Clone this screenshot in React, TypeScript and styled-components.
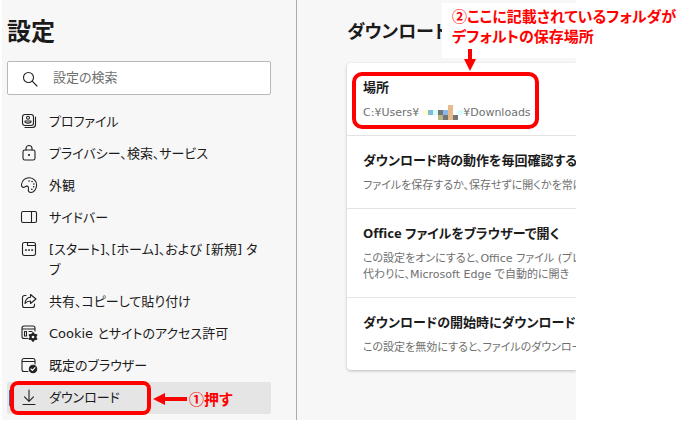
import React from 'react';
import styled, { createGlobalStyle, css } from 'styled-components';

const Global = createGlobalStyle`
  * { box-sizing: border-box; }
  body {
    margin: 0;
    background: #fff;
    color: #1b1b1b;
    font: 13px/20px "DejaVu Sans", "Noto Sans CJK JP", sans-serif;
    font-feature-settings: "palt";
  }
  h1, h2, h3, p, ul { margin: 0; padding: 0; }
`;

const Page = styled.div`
  position: relative;
  padding: 0 114px 0 2px;
`;

const Window = styled.div`
  display: grid;
  grid-template-columns: 295px minmax(0, 1fr);
  min-height: 420px;
  background: #f7f7f7;
`;

const Sidebar = styled.aside`
  padding: 16px 25px 6px 5px;
  border-right: 1px solid #ababab;
`;

const Title = styled.h1`
  font-size: 24px;
  line-height: 32px;
  font-weight: 700;
`;

const Search = styled.label`
  display: flex;
  align-items: center;
  gap: 15px;
  height: 34px;
  margin: 13px 0 11px;
  padding: 0 14px;
  background: #fff;
  border: 1px solid #b8b8b8;
  border-radius: 2px;
`;

const SearchInput = styled.input`
  flex: 1;
  min-width: 0;
  padding: 0;
  border: 0;
  outline: 0;
  background: none;
  font: inherit;
  font-feature-settings: inherit;
  &::placeholder { color: #6f6f6f; opacity: 1; }
`;

const Menu = styled.ul`
  list-style: none;
`;

const MenuItem = styled.li`
  position: relative;
`;

const MenuLink = styled.a<{ $active?: boolean }>`
  display: flex;
  gap: 12px;
  padding: 6px 8px 6px 14px;
  border-radius: 2px;
  color: inherit;
  text-decoration: none;
  ${p => p.$active && css`
    background: #e5e5e5;
    &::before {
      content: "";
      position: absolute;
      left: 2px;
      top: 8px;
      width: 2px;
      height: 16px;
      background: #3f6f9c;
    }
  `}
`;

const Icon = styled.svg`
  flex: none;
  width: 16px;
  height: 16px;
  margin-top: 1px;
  overflow: visible;
  fill: none;
  stroke: #222;
  stroke-width: 1.1;
  stroke-linecap: round;
  stroke-linejoin: round;
`;

const Main = styled.main`
  padding: 18px 0 48px 50px;
`;

const Heading = styled.h2`
  font-size: 18px;
  line-height: 28px;
  font-weight: 700;
  white-space: nowrap;
`;

const Card = styled.div`
  margin-top: 17px;
  background: #fff;
  border-radius: 4px 0 0 4px;
  box-shadow: 0 1px 3px rgba(0, 0, 0, 0.25);
  clip-path: inset(-6px 0 -6px -6px);
`;

const Setting = styled.section`
  position: relative;
  padding: 14px 0 14px 16px;
  & + & { border-top: 1px solid #e3e3e3; }
`;

const SettingTitle = styled.h3`
  font-family: "Noto Sans", "Noto Sans CJK JP", sans-serif;
  font-size: 13px;
  line-height: 20px;
  font-weight: 700;
  white-space: nowrap;
  overflow: hidden;
`;

const Detail = styled.p`
  margin-top: 8px;
  font-size: 11px;
  line-height: 16px;
  color: #6f6f6f;
  white-space: nowrap;
  overflow: hidden;
`;

const Mosaic = styled.svg`
  width: 40px;
  height: 15px;
  margin-left: 4px;
  vertical-align: -4px;
`;

const Ring = styled.span<{ $place: 'menu' | 'card' }>`
  position: absolute;
  border: 4px solid #f00;
  pointer-events: none;
  ${p => p.$place === 'menu'
    ? css`left: 3px; top: -1px; width: 141px; height: 34px; border-radius: 8px;`
    : css`left: 5px; top: 9px; width: 187px; height: 57px; border-radius: 10px;`}
`;

const Note = styled.div<{ $place: 'menu' | 'card' }>`
  position: absolute;
  color: #f00;
  font-weight: 700;
  font-size: 15px;
  font-family: "Noto Sans CJK JP", sans-serif;
  white-space: nowrap;
  ${p => p.$place === 'menu'
    ? css`
      left: 146px; top: 7px;
      display: flex; align-items: center; gap: 2px;
      line-height: 20px;`
    : css`
      left: 442px; right: 0; top: 3px;
      height: 55px; padding: 3px 0 0 10px;
      background: #fff;
      line-height: 20px;`}
`;

const NoteArrow = styled.svg<{ $down?: boolean }>`
  display: block;
  fill: #f00;
  ${p => p.$down && css`
    position: absolute;
    left: 22px;
    top: 46px;
  `}
`;

const icons = {
  profile: <><rect x="1.5" y="1.5" width="11" height="11" rx="2.5" /><circle cx="7" cy="4.8" r="1.5" /><path d="M4 8h6v.8c0 1.7-6 1.7-6 0zM14.5 4v7.5a3 3 0 0 1-3 3H4" /></>,
  lock: <><rect x="2" y="5" width="12" height="10" rx="1.8" /><path d="M5 5V3.5a3 3 0 0 1 6 0V5" /><circle cx="8" cy="10" r=".5" fill="#222" /></>,
  palette: <><path d="M.5 7.500C1 3 4.500.5 8.500.7c4.200.2 7.300 3.500 7.100 7.500-.2 4.200-2.900 7.300-5.600 7.300-2.300 0-3-1.700-2.600-3.700.3-1.600-.3-2.900-1.800-2.700-1.300.2-2.200 1.700-3.700 1.200C.6 9.800.4 8.800.5 7.500Z" /><path d="M8 4h.1M11 4.500h.1M12.800 7h.1M12.600 9.800h.1M10.800 12.200h.1" strokeWidth="1.500" /></>,
  sidebar: <><rect x=".5" y="2.500" width="15" height="11" rx="1.500" /><path d="M10.500 2.500v11" /></>,
  tabs: <><rect x="1.500" y="1.500" width="13" height="13" rx="2" /><path d="M6.500 1.500v3h8" /><path d="M4.700 9h.5M7.800 9h.5M10.900 9h.5" strokeWidth="1.700" /></>,
  share: <><path d="M5 2.500H3.500a2 2 0 0 0-2 2v8a2 2 0 0 0 2 2h8a2 2 0 0 0 2-2V11" /><path d="M9.500 1.500 15 6l-5.500 4.500V8C7 8 5.300 9 4 10.500 4.300 7 6.300 4.500 9.500 4.200Z" /></>,
  cookie: <><path d="M7 13.500H3a2 2 0 0 1-2-2V3a2 2 0 0 1 2-2h9a2 2 0 0 1 2 2v3M1 4h13M3.500 6.500h2v4.500h-2zM8 6.500h3" /><circle cx="12" cy="12" r="2.500" strokeWidth="2.300" /><path d="M12 8v1M12 15v1M8.500 10l.8.500M14.700 13.500l.8.500M15.500 10l-.8.500M9.300 13.500l-.8.500" strokeWidth="1.800" /></>,
  browser: <><path d="M7 14.500H3a2 2 0 0 1-2-2V3.500a2 2 0 0 1 2-2h9a2 2 0 0 1 2 2V7M1 4.500h13" /><circle cx="12" cy="12" r="3.700" fill="#222" /><path d="m10 12 1.400 1.400 2.600-2.800" stroke="#fff" /></>,
  download: <path d="M8 1v11M3.500 7.800 8 12.300l4.500-4.500M2 15.500h12" />,
};

const menu: { icon: keyof typeof icons; label: string; active?: boolean }[] = [
  { icon: 'profile', label: 'プロファイル' },
  { icon: 'lock', label: 'プライバシー、検索、サービス' },
  { icon: 'palette', label: '外観' },
  { icon: 'sidebar', label: 'サイドバー' },
  { icon: 'tabs', label: '[スタート]、[ホーム]、および [新規] タブ' },
  { icon: 'share', label: '共有、コピーして貼り付け' },
  { icon: 'cookie', label: 'Cookie とサイトのアクセス許可' },
  { icon: 'browser', label: '既定のブラウザー' },
  { icon: 'download', label: 'ダウンロード', active: true },
];

export default function App() {
  return (
    <Page>
      <Global />
      <Window>
        <Sidebar>
          <Title>設定</Title>
          <Search>
            <Icon viewBox="0 0 16 16" aria-hidden="true">
              <circle cx="6.500" cy="6.500" r="5" /><path d="m10.200 10.200 4.800 4.800" />
            </Icon>
            <SearchInput type="search" aria-label="設定の検索" placeholder="設定の検索" />
          </Search>
          <nav>
            <Menu>
              {menu.map(item => (
                <MenuItem key={item.icon}>
                  <MenuLink href="#" $active={item.active}>
                    <Icon viewBox="0 0 16 16" aria-hidden="true">{icons[item.icon]}</Icon>
                    <span>{item.label}</span>
                  </MenuLink>
                  {item.active && (
                    <>
                      <Ring $place="menu" />
                      <Note $place="menu">
                        <NoteArrow width="34" height="12" viewBox="0 0 34 12">
                          <path d="M0 6 12 0v4h22v4H12v4z" />
                        </NoteArrow>
                        ①押す
                      </Note>
                    </>
                  )}
                </MenuItem>
              ))}
            </Menu>
          </nav>
        </Sidebar>
        <Main>
          <Heading>ダウンロード</Heading>
          <Card>
            <Setting>
              <SettingTitle>場所</SettingTitle>
              <Detail>
                C:¥Users¥
                <Mosaic viewBox="0 0 40 15" aria-hidden="true">
                  <path fill="#ffffd5" d="M0 5h5v5H0z" />
                  <path fill="#86b9d2" d="M5 5h5v5H5z" />
                  <path fill="#d5ffff" d="M10 5h5v5h-5zM35 5h5v5h-5z" />
                  <path fill="#757575" d="M15 5h5v5h-5zM20 10h5v5h-5zM30 10h5v5h-5z" />
                  <path fill="#b8b686" d="M15 10h5v5h-5z" />
                  <path fill="#89b8e8" d="M20 5h5v5h-5z" />
                  <path fill="#e8ba8b" d="M25 0h5v15h-5z" />
                </Mosaic>
                ¥Downloads
              </Detail>
              <Ring $place="card" />
            </Setting>
            <Setting>
              <SettingTitle>ダウンロード時の動作を毎回確認する</SettingTitle>
              <Detail>ファイルを保存するか、保存せずに開くかを常に</Detail>
            </Setting>
            <Setting>
              <SettingTitle>Office ファイルをブラウザーで開く</SettingTitle>
              <Detail>
                この設定をオンにすると、Office ファイル (プレ
                <br />
                代わりに、Microsoft Edge で自動的に開き
              </Detail>
            </Setting>
            <Setting>
              <SettingTitle>ダウンロードの開始時にダウンロード メ</SettingTitle>
              <Detail>この設定を無効にすると、ファイルのダウンロード</Detail>
            </Setting>
          </Card>
        </Main>
      </Window>
      <Note $place="card">
        ②ここに記載されているフォルダが
        <br />
        デフォルトの保存場所
        <NoteArrow $down width="12" height="22" viewBox="0 0 12 22">
          <path d="M4 0h4v10h4L6 22 0 10h4z" />
        </NoteArrow>
      </Note>
    </Page>
  );
}
